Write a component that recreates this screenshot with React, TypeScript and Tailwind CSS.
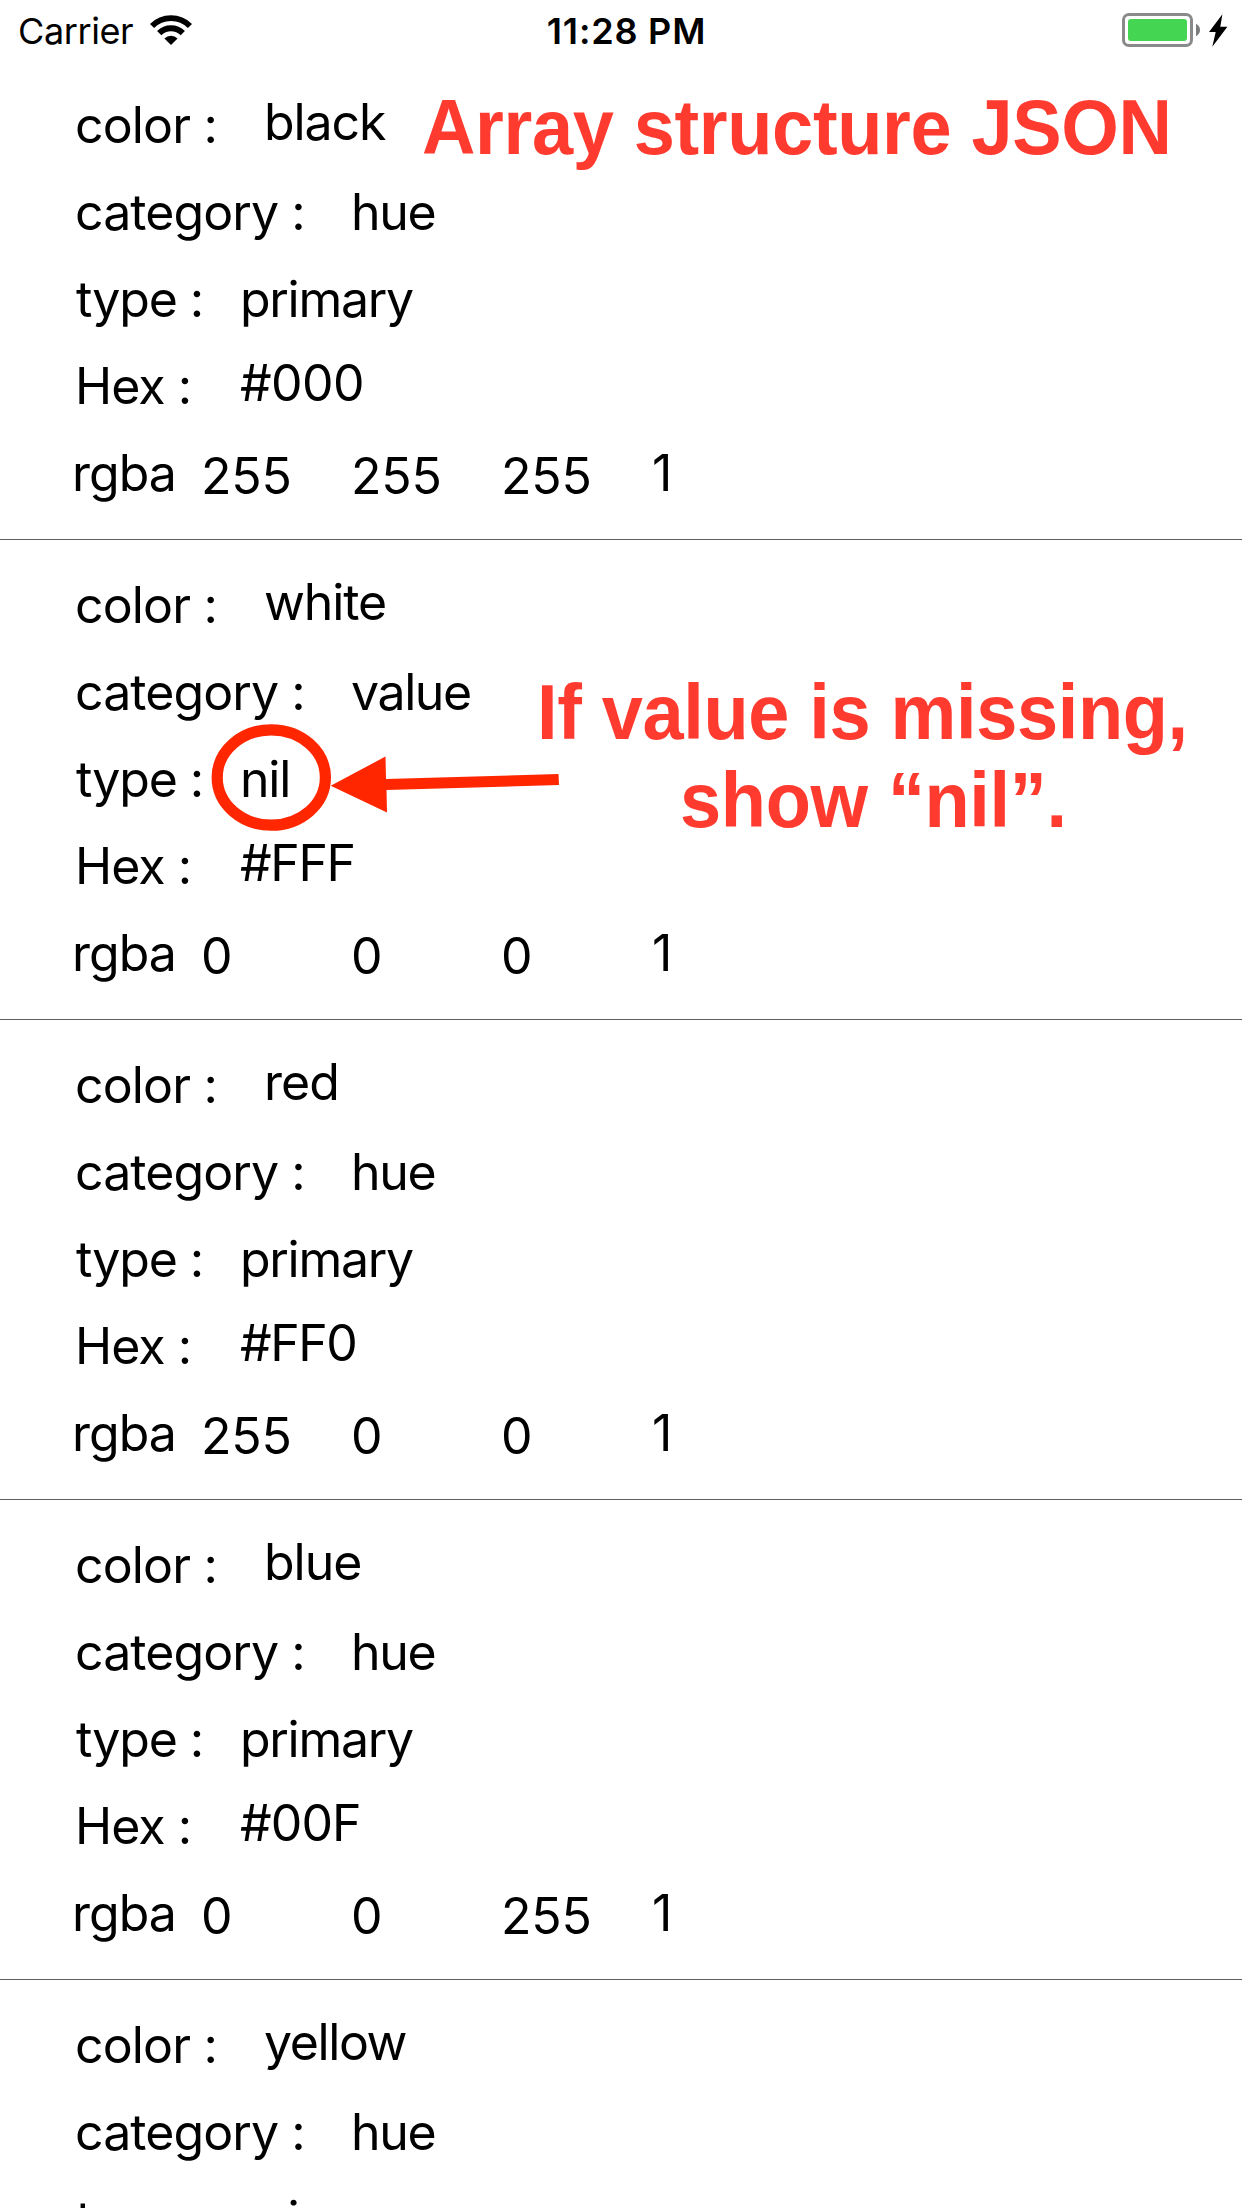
type Field = { text: string; className: string };

type Entry = { color: Field; category: Field; type: Field; hex: Field; rgba: string[] };

const hue: Field = { text: "hue", className: "tracking-[-1.3px]" };
const primary: Field = { text: "primary", className: "tracking-[-1.3px]" };

const entries: Entry[] = [
  {
    color: { text: "black", className: "tracking-[-1.1px]" },
    category: hue,
    type: primary,
    hex: { text: "#000", className: "tracking-[-0.6px]" },
    rgba: ["255", "255", "255", "1"],
  },
  {
    color: { text: "white", className: "tracking-[-1.1px]" },
    category: { text: "value", className: "tracking-[-1.4px]" },
    type: { text: "nil", className: "tracking-[-1.2px]" },
    hex: { text: "#FFF", className: "tracking-[-1.4px]" },
    rgba: ["0", "0", "0", "1"],
  },
  {
    color: { text: "red", className: "tracking-[-1px]" },
    category: hue,
    type: primary,
    hex: { text: "#FF0", className: "tracking-[-1.5px]" },
    rgba: ["255", "0", "0", "1"],
  },
  {
    color: { text: "blue", className: "tracking-[-1px]" },
    category: hue,
    type: primary,
    hex: { text: "#00F", className: "tracking-[-0.9px]" },
    rgba: ["0", "0", "255", "1"],
  },
  {
    color: { text: "yellow", className: "tracking-[-1.4px]" },
    category: hue,
    type: primary,
    hex: { text: "#FF0", className: "tracking-[-1.5px]" },
    rgba: ["255", "255", "0", "1"],
  },
];

function StatusBar() {
  return (
    <header className="grid h-[60px] grid-cols-3 items-start">
      <div className="flex pl-[18px]">
        <span className="w-[130px] pt-[9px] text-[36px] leading-[44px] tracking-[-0.4px]">Carrier</span>
        <svg className="mt-[14px]" width="46" height="34" viewBox="148 14 46 34" fill="none" stroke="black">
          <path d="M152.05 26.05A26.8 26.8 0 0 1 189.95 26.05" strokeWidth="5.8" />
          <path d="M159.2 33.2A16.7 16.7 0 0 1 182.8 33.2" strokeWidth="6" />
          <path d="M171 45L164.4 38.4A9.3 9.3 0 0 1 177.6 38.4Z" fill="black" stroke="none" />
        </svg>
      </div>
      <span className="pt-[9px] pl-[11px] text-center text-[36px] leading-[44px] font-semibold tracking-[0.8px]">11:28 PM</span>
      <div className="flex justify-end pt-[13px] pr-[14px]">
        <div className="h-[34px] w-[71px] rounded-[7px] border-[3px] border-[#8a8a8a] p-[3px]">
          <div className="h-full rounded-[3px] bg-[#44d553]" />
        </div>
        <svg width="35" height="34" viewBox="1193 13 35 34">
          <path d="M1196 23.8Q1200 26 1200 30Q1200 34 1196 36.2Z" fill="#7c7c7c" />
          <path d="M1222.4 14.2L1209 32H1215.7L1212.3 46.8L1227.4 26.7H1220.3Z" fill="black" />
        </svg>
      </div>
    </header>
  );
}

function EntryCell({ entry }: { entry: Entry }) {
  return (
    <li className="flex h-[480px] shrink-0 flex-col gap-[27px] border-b border-[#606062] pt-[35px] text-[50px] leading-[60px] whitespace-pre">
      <div className="flex h-[60px] pl-[75px]">
        <span className="w-[189px] tracking-[-0.85px]">color :</span>
        <span className={"-mt-[3px] " + entry.color.className}>{entry.color.text}</span>
      </div>
      <div className="flex h-[60px] pl-[75px]">
        <span className="w-[276px] tracking-[-0.92px]">category :</span>
        <span className={entry.category.className}>{entry.category.text}</span>
      </div>
      <div className="flex h-[60px] pl-[76px]">
        <span className="w-[164px] tracking-[-1.1px]">type :</span>
        <span className={entry.type.className}>{entry.type.text}</span>
      </div>
      <div className="flex h-[60px] pl-[75px]">
        <span className="w-[165px] tracking-[-0.95px]">Hex :</span>
        <span className={"-mt-[3px] " + entry.hex.className}>{entry.hex.text}</span>
      </div>
      <div className="flex h-[60px] pl-[72px]">
        <span className="w-[129px] tracking-[-1px]">rgba</span>
        {entry.rgba.map((n, i) => (
          <span key={i} className={i < 3 ? "mt-[3px] w-[150px] tracking-[-0.2px]" : "ml-px tracking-[-0.2px]"}>
            {n}
          </span>
        ))}
      </div>
    </li>
  );
}

function Annotations() {
  return (
    <div className="absolute inset-0 font-['Liberation_Sans',Arial,sans-serif] text-[74px] leading-[88px] font-bold tracking-[-0.36px] whitespace-nowrap text-[#ff3b30]">
      <p className="absolute top-[84px] left-[422px] scale-y-[1.04]">Array structure JSON</p>
      <div className="absolute top-[669px] left-[537px]">
        <p className="scale-y-[1.04]">If value is missing,</p>
        <p className="ml-[143px] scale-y-[1.04]">show “nil”.</p>
      </div>
      <svg className="absolute top-[720px] left-[205px]" width="360" height="116" viewBox="205 720 360 116">
        <ellipse cx="271.3" cy="777.5" rx="54.1" ry="47.7" fill="none" stroke="#ff2600" strokeWidth="11.2" />
        <path d="M330.7 785.8L385.5 756.5L386 778.9L558.5 774L559 785L386.5 790L387 812.5Z" fill="#ff2600" />
      </svg>
    </div>
  );
}

export default function App() {
  return (
    <main className="relative h-[2208px] w-[1242px] overflow-hidden bg-white font-[Inter,sans-serif] text-black">
      <StatusBar />
      <ul className="flex flex-col">
        {entries.map((entry) => (
          <EntryCell key={entry.color.text} entry={entry} />
        ))}
      </ul>
      <Annotations />
    </main>
  );
}
